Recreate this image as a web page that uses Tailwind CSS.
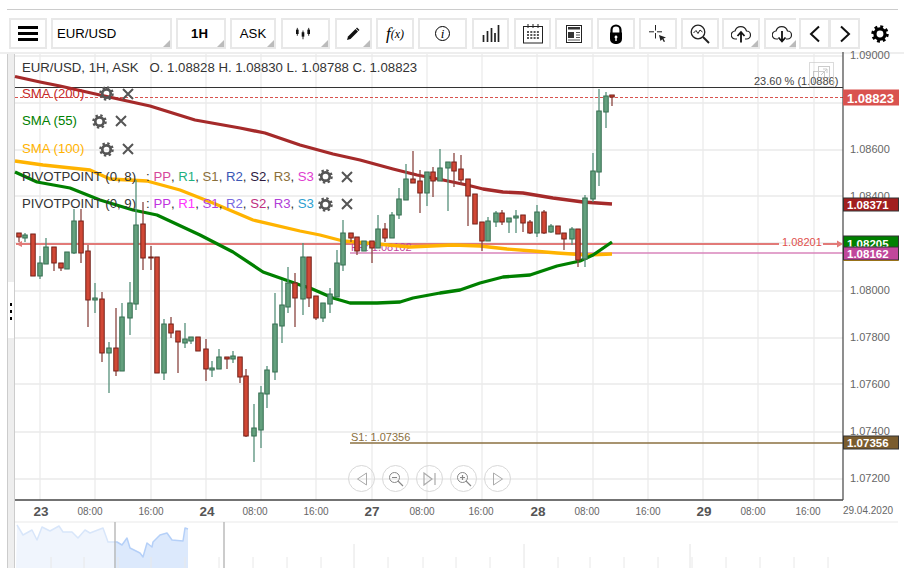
<!DOCTYPE html>
<html lang="en">
<head>
  <meta charset="UTF-8" />
  <title>EUR/USD chart</title>
  <script src="https://cdn.jsdelivr.net/npm/@tailwindcss/browser@4"></script>
</head>
<body class="bg-white overflow-hidden font-['Liberation_Sans',Arial,sans-serif] text-[#333]">
<svg width="0" height="0" class="absolute">
  <symbol id="cog" viewBox="0 0 20 20">
    <circle cx="10" cy="10" r="5.6" fill="none" stroke="currentColor" stroke-width="3.6"/>
    <circle cx="10" cy="10" r="8.2" fill="none" stroke="currentColor" stroke-width="3" stroke-dasharray="3.2 3.24"/>
  </symbol>
  <symbol id="cross" viewBox="0 0 12 12">
    <path d="M1 1L11 11M11 1L1 11" stroke="currentColor" stroke-width="2" fill="none"/>
  </symbol>
</svg>

<div class="relative w-[904px] h-[568px] overflow-hidden">
  <!-- Top bar -->
  <div class="pt-[9px] pl-[7px] pr-[6px]"><div class="h-px bg-[#ccc]"></div></div>
  <div class="flex h-[31px] mt-[8px] pl-[9px] text-[13.2px] text-black">
    <div class="w-[38px] border-2 border-[#e8e8e8] flex flex-col items-center justify-center gap-[3.5px]">
      <i class="block w-[20px] h-[2.5px] bg-black"></i><i class="block w-[20px] h-[2.5px] bg-black"></i><i class="block w-[20px] h-[2.5px] bg-black"></i>
    </div>
    <div class="relative w-[121px] ml-[4px] border-2 border-[#e8e8e8] flex items-center pl-[4px]">EUR/USD<i class="absolute right-0 bottom-0 w-0 h-0 border-l-[7px] border-b-[7px] border-l-transparent border-b-[#bbb]"></i></div>
    <div class="relative w-[50px] ml-[4px] border-2 border-[#e8e8e8] flex items-center justify-center font-bold pr-[3px]">1H<i class="absolute right-0 bottom-0 w-0 h-0 border-l-[7px] border-b-[7px] border-l-transparent border-b-[#bbb]"></i></div>
    <div class="relative w-[46px] ml-[4px] border-2 border-[#e8e8e8] flex items-center justify-center">ASK<i class="absolute right-0 bottom-0 w-0 h-0 border-l-[7px] border-b-[7px] border-l-transparent border-b-[#bbb]"></i></div>
    <div class="relative w-[49px] ml-[5px] border-2 border-[#e8e8e8] flex items-center pl-[12px]">
      <svg width="16" height="14" viewBox="0 0 18 16"><path d="M2.5 1V10M9 4V14M15.500 1V10" stroke="#111" stroke-width="1"/><rect x="1" y="3" width="3" height="5" fill="#111"/><rect x="7.500" y="6" width="3" height="5" fill="#111"/><rect x="14" y="3" width="3" height="5" fill="#111"/></svg>
      <i class="absolute right-0 bottom-0 w-0 h-0 border-l-[7px] border-b-[7px] border-l-transparent border-b-[#bbb]"></i>
    </div>
    <div class="relative w-[37px] ml-[5px] border-2 border-[#e8e8e8] flex items-center pl-[9px]">
      <svg width="14" height="14" viewBox="0 0 14 14"><path d="M1 13L2 9.500L9.500 2L12 4.500L4.500 12Z" fill="#111"/><path d="M10.500 1L13 3.500" stroke="#111" stroke-width="1.500"/></svg>
      <i class="absolute right-0 bottom-0 w-0 h-0 border-l-[7px] border-b-[7px] border-l-transparent border-b-[#bbb]"></i>
    </div>
    <div class="w-[38px] ml-[4px] border-2 border-[#e8e8e8] flex items-center justify-center font-['Liberation_Serif',serif] italic"><span class="text-[17px]">f</span><span class="text-[12px]">(x)</span></div>
    <div class="w-[49px] ml-[4px] border-2 border-[#e8e8e8] flex items-center justify-center">
      <span class="w-[15px] h-[15px] rounded-full border border-black flex items-center justify-center font-['Liberation_Serif',serif] italic text-[13px]">i</span>
    </div>
    <div class="w-[37px] ml-[5px] border-2 border-[#e8e8e8] flex items-center justify-center">
      <svg width="18" height="17" viewBox="0 0 18 17"><path d="M1.500 17V10M5.500 17V6M9.500 17V3M13 17V8M16.500 17V0" stroke="#222" stroke-width="1.700"/></svg>
    </div>
    <div class="w-[37px] ml-[5px] border-2 border-[#e8e8e8] flex items-center justify-center">
      <svg width="20" height="20" viewBox="0 0 20 20"><rect x="0.500" y="2.500" width="19" height="16.500" fill="none" stroke="#222"/><path d="M5 0V4M10 0V4M15 0V4" stroke="#222"/><path d="M4 8H16M4 11H16M4 14H16" stroke="#222" stroke-width="1.600" stroke-dasharray="2 1.300"/></svg>
    </div>
    <div class="w-[38px] ml-[4px] border-2 border-[#e8e8e8] flex items-center justify-center">
      <svg width="16" height="18" viewBox="0 0 16 18"><rect x="0.500" y="0.500" width="15" height="17" fill="none" stroke="#222"/><rect x="2" y="2" width="12" height="2.500" fill="#333"/><rect x="2" y="7" width="6" height="6" fill="#333"/><path d="M10 7.500H14M10 10H14M10 12.500H14M2 15H14" stroke="#555"/></svg>
    </div>
    <div class="w-[38px] ml-[4px] border-2 border-[#e8e8e8] flex items-center justify-center">
      <svg width="16" height="20" viewBox="0 0 16 20"><path d="M3.500 9V6a4.500 4.500 0 0 1 9 0V9" fill="none" stroke="#000" stroke-width="2.200"/><path fill-rule="evenodd" d="M2 8.500H14a2 2 0 0 1 0 0V15a5 5 0 0 1-5 5H7a5 5 0 0 1-5-5ZM8 11.500a1.500 1.500 0 0 0-.7 2.800V17H8.700V14.300a1.500 1.500 0 0 0-.7-2.800Z" fill="#000"/></svg>
    </div>
    <div class="w-[38px] ml-[4px] border-2 border-[#e8e8e8] flex items-center justify-center">
      <svg width="18" height="18" viewBox="0 0 18 18"><path d="M6.500 0V5.500M6.500 8V13.500M0 6.800H5M8 6.800H13" stroke="#222"/><path d="M10 10L17 12.500L14.500 13.500L16 16.500L14.800 17L13.300 14.300L11.500 16Z" fill="#222"/></svg>
    </div>
    <div class="w-[38px] ml-[4px] border-2 border-[#e8e8e8] flex items-center justify-center">
      <svg width="20" height="20" viewBox="0 0 20 20"><circle cx="8" cy="8" r="6.800" fill="none" stroke="#222" stroke-width="1.300"/><path d="M3.500 9L6 6.500L8 9.500L10 6L12.500 8" fill="none" stroke="#222"/><path d="M13 13L19 19" stroke="#222" stroke-width="2"/></svg>
    </div>
    <div class="relative w-[38px] ml-[3px] border-2 border-[#e8e8e8] flex items-center pl-[7px]">
      <svg width="20" height="18" viewBox="0 0 20 18"><path d="M6 14H4.500a4 4 0 0 1-.5-8a6 6 0 0 1 11.500 0a4 4 0 0 1 0 8H14" fill="none" stroke="#222" stroke-width="1.200"/><path d="M10 17.500V8M6.500 11L10 7L13.500 11" fill="none" stroke="#111" stroke-width="1.800"/></svg>
      <i class="absolute right-0 bottom-0 w-0 h-0 border-l-[7px] border-b-[7px] border-l-transparent border-b-[#bbb]"></i>
    </div>
    <div class="relative w-[32px] ml-[4px] border-2 border-r-0 border-[#e8e8e8] flex items-center pl-[6px]">
      <svg width="20" height="18" viewBox="0 0 20 18"><path d="M6 14H4.500a4 4 0 0 1-.5-8a6 6 0 0 1 11.500 0a4 4 0 0 1 0 8H14" fill="none" stroke="#222" stroke-width="1.200"/><path d="M10 6V16M6.500 12.500L10 16.500L13.500 12.500" fill="none" stroke="#111" stroke-width="1.800"/></svg>
      <i class="absolute right-0 bottom-0 w-0 h-0 border-l-[7px] border-b-[7px] border-l-transparent border-b-[#bbb]"></i>
    </div>
    <div class="w-[31px] ml-[3px] border-2 border-[#e8e8e8] flex items-center justify-center">
      <svg width="12" height="18" viewBox="0 0 12 18"><path d="M10 1.500L2 9L10 16.500" fill="none" stroke="#111" stroke-width="2"/></svg>
    </div>
    <div class="w-[31px] -ml-[1px] border-2 border-[#e8e8e8] flex items-center justify-center">
      <svg width="12" height="18" viewBox="0 0 12 18"><path d="M2 1.500L10 9L2 16.500" fill="none" stroke="#111" stroke-width="2"/></svg>
    </div>
    <div class="w-[40px] flex items-center justify-center text-black">
      <svg width="18" height="18"><use href="#cog"/></svg>
    </div>
  </div>

  <!-- Chart -->
  <div class="relative mt-[3px] h-[517px] border-t-2 border-[#eee]">
    <div class="absolute left-[7px] top-0 w-[8px] h-full bg-[#eee] border-l border-r border-[#ccc]"></div>
    <div class="absolute left-[8px] top-[228px] w-[6px] h-[56px] bg-white flex flex-col items-center justify-center gap-[4px] pt-[2px]">
      <i class="block w-[2px] h-[3px] bg-black"></i><i class="block w-[2px] h-[3px] bg-black"></i><i class="block w-[2px] h-[3px] bg-black"></i>
    </div>
    <svg id="chart" class="absolute left-0 top-[-3px]" width="904" height="517" viewBox="0 51 904 517" font-family="Liberation Sans, Arial, sans-serif"></svg>

    <!-- Legend -->
    <div class="absolute left-[22px] top-[2px] flex flex-col text-[13.2px]">
      <div class="h-[24px] flex items-center whitespace-pre">EUR/USD, 1H, ASK   O. 1.08828 H. 1.08830 L. 1.08788 C. 1.08823</div>
      <div class="h-[27px] flex items-center text-[#c62828]">SMA (200)<svg class="ml-[15px] text-[#555]" width="15" height="15"><use href="#cog"/></svg><svg class="ml-[8px] text-[#555]" width="12" height="12"><use href="#cross"/></svg></div>
      <div class="h-[28px] flex items-center text-[#008000]">SMA (55)<svg class="ml-[15px] text-[#555]" width="15" height="15"><use href="#cog"/></svg><svg class="ml-[8px] text-[#555]" width="12" height="12"><use href="#cross"/></svg></div>
      <div class="h-[28px] flex items-center text-[#ffb300]">SMA (100)<svg class="ml-[15px] text-[#555]" width="15" height="15"><use href="#cog"/></svg><svg class="ml-[8px] text-[#555]" width="12" height="12"><use href="#cross"/></svg></div>
      <div class="h-[27px] flex items-center whitespace-pre"><span>PIVOTPOINT (0, 8)</span><span class="ml-[10px]">: </span><span class="text-[#d6479b]">PP</span>, <span class="text-[#1fb07f]">R1</span>, <span class="text-[#8b6f3a]">S1</span>, <span class="text-[#3a57b5]">R2</span>, <span class="text-[#2d1a3f]">S2</span>, <span class="text-[#8b6f3a]">R3</span>, <span class="text-[#e040d0]">S3</span><svg class="ml-[4px] text-[#555]" width="15" height="15"><use href="#cog"/></svg><svg class="ml-[8px] text-[#555]" width="12" height="12"><use href="#cross"/></svg></div>
      <div class="h-[28px] flex items-center whitespace-pre"><span>PIVOTPOINT (0, 9)</span><span class="ml-[10px]">: </span><span class="text-[#c033e0]">PP</span>, <span class="text-[#ff33ff]">R1</span>, <span class="text-[#b040e0]">S1</span>, <span class="text-[#7a6ae0]">R2</span>, <span class="text-[#c0307f]">S2</span>, <span class="text-[#b040d8]">R3</span>, <span class="text-[#2e9fd0]">S3</span><svg class="ml-[4px] text-[#555]" width="15" height="15"><use href="#cog"/></svg><svg class="ml-[8px] text-[#555]" width="12" height="12"><use href="#cross"/></svg></div>
    </div>

    <!-- Popout -->
    <div class="absolute left-[809px] top-[8px] w-[25px] h-[25px] border border-[#ccc]/70 flex items-center justify-center">
      <svg width="17" height="17" viewBox="0 0 17 17" opacity=".5"><rect x="0.500" y="5.500" width="11" height="11" fill="none" stroke="#999"/><rect x="5.500" y="0.500" width="11" height="11" fill="none" stroke="#999"/><path d="M8 9L14 3M10 3H14V7" fill="none" stroke="#999"/></svg>
    </div>

    <!-- Navigation buttons -->
    <div class="absolute left-[348px] top-[411px] flex gap-[7px]">
      <div class="w-[27px] h-[27px] rounded-full border border-[#d8d8d8] flex items-center justify-center"><svg width="12" height="14" viewBox="0 0 12 14"><path d="M10.500 1V13L1.500 7Z" fill="none" stroke="#aaa"/></svg></div>
      <div class="w-[27px] h-[27px] rounded-full border border-[#d8d8d8] flex items-center justify-center"><svg width="16" height="16" viewBox="0 0 16 16"><circle cx="6.500" cy="6.500" r="5" fill="none" stroke="#888"/><path d="M4 6.500H9M10 10L15 15" stroke="#888" stroke-width="1.200"/></svg></div>
      <div class="w-[27px] h-[27px] rounded-full border border-[#d8d8d8] flex items-center justify-center"><svg width="14" height="14" viewBox="0 0 14 14"><path d="M1 1V13L9 7ZM12 1V13" fill="none" stroke="#aaa" stroke-width="1.200"/></svg></div>
      <div class="w-[27px] h-[27px] rounded-full border border-[#d8d8d8] flex items-center justify-center"><svg width="16" height="16" viewBox="0 0 16 16"><circle cx="6.500" cy="6.500" r="5" fill="none" stroke="#888"/><path d="M4 6.500H9M6.500 4V9M10 10L15 15" stroke="#888" stroke-width="1.200"/></svg></div>
      <div class="w-[27px] h-[27px] rounded-full border border-[#d8d8d8] flex items-center justify-center"><svg width="12" height="14" viewBox="0 0 12 14"><path d="M1.500 1V13L10.500 7Z" fill="none" stroke="#aaa"/></svg></div>
    </div>
  </div>
</div>

<script>
  const chart = document.getElementById("chart");
  let out = "";
  const line = (x1, y1, x2, y2, c, w, extra = "") => { out += `<line x1="${x1}" y1="${y1}" x2="${x2}" y2="${y2}" stroke="${c}" stroke-width="${w}" ${extra}/>`; };
  const text = (x, y, s, c, size, extra = "") => { out += `<text x="${x}" y="${y}" fill="${c}" font-size="${size}" ${extra}>${s}</text>`; };
  const tag = (y, h, bg, s, border = "#333", size = 11.500) => {
    out += `<rect x="843.500" y="${y}" width="55" height="${h}" fill="${bg}" stroke="${border}"/>`;
    text(847, y + h - 2.500, s, "#fff", size, 'font-weight="bold"');
  };
  const poly = (pts, c, w = 3.300) => { out += `<polyline points="${pts}" fill="none" stroke="${c}" stroke-width="${w}" stroke-linejoin="round"/>`; };

  // grid
  [40,95,151,206,261,316,372,427,482,537,593,648,703,758,814].forEach(x => line(x, 52, x, 500, "#eee", 1.500));
  [56,103,150,196,243,291,338,384,432,479].forEach(y => line(15, y, 843, y, "#eaeaea", 1.300));

  // price axis labels
  [[59,"1.09000"],[153,"1.08600"],[200,"1.08400"],[294,"1.08000"],[341,"1.07800"],[388,"1.07600"],[435,"1.07400"],[482,"1.07200"]]
    .forEach(([y, s]) => text(850, y, s, "#666", 11));

  // horizontal levels
  line(15, 87.500, 843, 87.500, "#333", 1);
  line(15, 97.500, 843, 97.500, "#d9534f", 1, 'stroke-dasharray="3 2"');
  text(754, 85, "23.60 % (1.0886)", "#444", 11);
  line(16, 244, 779, 244, "#e27a78", 2);
  line(823, 244, 837, 244, "#e27a78", 2);
  out += '<path d="M837 240.500L843 244L837 247.500Z" fill="#e27a78"/><path d="M22 241L16 244L22 247Z" fill="#e27a78"/>';
  text(782, 246, "1.08201", "#e0504c", 11);
  line(350, 253, 843, 253, "#d884bb", 1.500);
  text(351, 251, "PP: 1.08162", "#c0479b", 11);
  line(350, 443, 843, 443, "#8b7040", 1.500);
  text(351, 441, "S1: 1.07356", "#8b7040", 11);

  // moving averages
  poly("15,76.500 40,82 60,86 100,95 150,106 195,120 240,128 265,133 300,145 333,154 360,160 393,169 417,175 443,180 467,185 483,189 503,192 523,193 553,198 583,202 612,204", "#a52a2a");
  poly("15,161 43,165 90,170 110,179 147,181 180,190 213,203 253,220 300,231 320,235 343,241 367,243 410,247 453,245 480,246 507,249 533,251 557,253 587,255 612,254", "#ffb300");
  poly("15,172 37,182 70,188 100,200 133,210 157,215 200,235 233,252 263,272 300,285 310,288 333,298 350,303 377,303 400,302 413,298 440,293 460,290 480,283 503,277 530,275 557,266 580,261 593,255 612,242", "#008000");

  // candles: x, wick top, wick bottom, body top, body bottom, colour
  const candles = [
    [19,233,242,233,237,"r"],[25,233,242,235,238,"g"],[33,234,276,234,276,"r"],[40,256,279,263,276,"g"],[46,238,264,247,264,"g"],[54,247,271,247,263,"r"],[61,263,271,263,268,"r"],[67,252,269,252,269,"g"],
    [74,209,254,221,253,"g"],[81,209,263,221,253,"r"],[88,245,327,251,300,"r"],[95,283,313,298,300,"g"],[102,292,362,299,353,"r"],[109,342,393,348,353,"g"],[116,308,376,348,371,"r"],[122,303,371,317,371,"g"],
    [130,282,335,303,318,"g"],[136,180,310,225,304,"g"],[143,202,270,224,258,"r"],[151,246,270,257,258,"r"],[157,257,373,257,373,"r"],[164,319,380,324,373,"g"],[171,317,338,324,333,"r"],[178,331,373,331,342,"r"],
    [185,323,348,339,343,"g"],[191,337,344,337,341,"g"],[198,337,351,337,351,"r"],[206,339,381,349,369,"r"],[212,361,377,368,370,"g"],[219,349,369,357,369,"g"],[227,357,369,357,359,"r"],[233,351,363,356,359,"g"],
    [240,357,383,357,377,"r"],[246,369,437,376,436,"r"],[254,404,462,428,436,"g"],[261,386,448,393,430,"g"],[267,366,408,370,394,"g"],[275,293,380,324,372,"g"],[282,280,343,305,326,"g"],[288,267,313,283,307,"g"],
    [295,273,327,283,298,"r"],[303,243,315,257,299,"g"],[309,257,307,257,298,"r"],[316,296,320,296,318,"r"],[323,303,322,303,318,"g"],[330,288,313,294,304,"g"],[337,250,297,263,297,"g"],[343,220,271,233,265,"g"],
    [351,233,242,233,238,"r"],[357,237,255,237,251,"r"],[364,241,251,241,251,"g"],[372,241,263,241,248,"r"],[378,215,248,229,248,"g"],[385,223,242,229,238,"r"],[392,212,238,215,238,"g"],[399,188,219,199,215,"g"],
    [406,164,200,179,200,"g"],[413,151,183,179,183,"r"],[420,170,213,181,193,"r"],[427,172,206,172,193,"g"],[433,167,197,172,181,"r"],[440,149,181,168,181,"g"],[448,162,211,162,168,"g"],[454,153,187,162,171,"r"],
    [461,155,185,169,180,"r"],[468,179,226,179,196,"r"],[475,194,224,194,224,"r"],[482,222,251,222,241,"r"],[488,217,241,221,241,"g"],[496,211,227,213,222,"g"],[502,210,225,213,222,"r"],[509,218,233,218,222,"g"],
    [516,210,233,216,218,"g"],[523,215,232,215,223,"r"],[530,220,234,222,233,"r"],[537,205,237,212,233,"g"],[544,210,234,212,233,"r"],[551,224,233,226,232,"g"],[558,226,234,226,234,"r"],[564,233,250,233,239,"r"],
    [572,227,245,229,239,"g"],[578,229,267,229,260,"r"],[585,195,267,198,259,"g"],[593,153,202,171,199,"g"],[599,89,186,111,172,"g"],[606,92,128,96,112,"g"],[612,95,106,95,97,"r"]
  ];
  candles.forEach(([x, wt, wb, bt, bb, c]) => {
    const wick = c === "r" ? "#8a4540" : "#55907a";
    const fill = c === "r" ? "#d14836" : "#64a07e";
    const edge = c === "r" ? "#701a12" : "#2e6b4c";
    line(x, wt, x, wb, wick, 1.300);
    out += `<rect x="${x - 3}" y="${bt - .5}" width="6" height="${Math.max(bb - bt + 1, 2)}" fill="#999" opacity=".3"/>`;
    out += `<rect x="${x - 2.200}" y="${bt}" width="4.400" height="${Math.max(bb - bt, 1)}" fill="${fill}" stroke="${edge}" stroke-width=".9"/>`;
  });

  // axes
  line(843, 52, 843, 500, "#444", 1.200);
  line(15, 500, 843, 500, "#444", 1.500);
  out += '<rect x="844" y="500.800" width="60" height="21" fill="#fff"/>';

  // price tags
  tag(90, 15, "#d9534f", "1.08823", "#d9534f", 13);
  tag(198, 13, "#a11f1f", "1.08371");
  tag(236, 14, "#008000", "1.08205");
  out += '<rect x="843.500" y="259" width="55" height="2" fill="#ffb300"/>';
  tag(247, 13, "#c0479b", "1.08162");
  tag(436, 13, "#7a5c2e", "1.07356");

  // time axis
  [[90,"08:00"],[151,"16:00"],[255,"08:00"],[316,"16:00"],[422,"08:00"],[481,"16:00"],[587,"08:00"],[648,"16:00"],[753,"08:00"],[808,"16:00"]]
    .forEach(([x, s]) => text(x, 514.500, s, "#666", 10, 'text-anchor="middle"'));
  [[41,"23"],[207,"24"],[372,"27"],[538,"28"],[704,"29"]]
    .forEach(([x, s]) => text(x, 516, s, "#555", 13.500, 'text-anchor="middle" font-weight="bold"'));
  text(868, 514, "29.04.2020", "#666", 10, 'text-anchor="middle"');
  line(15, 522, 898, 522, "#eaeaea", 1.200);

  // navigator
  const pale = "17,525 23,535 32,530 37,540 42,527 50,531 59,526 63,532 72,532 78,538 85,530 90,533 103,528 108,542 114,542";
  const blue = "114,542 117,542 122,545 127,538 130,548 140,553 143,557 147,543 152,547 153,542 160,535 167,533 172,540 183,541 185,528 188,529";
  out += `<polygon points="16,568 ${pale} 114,568" fill="#f0f5fd"/><polygon points="${blue} 188,568 114,568" fill="#dce9fc"/>`;
  poly(pale, "#d8e6fa", 1.500);
  poly(blue, "#b5d0f8", 1.500);
  [51,84,118,151,185,219,253,287,321,388,423,456,490,558,590,624,658,692,726,760,794,828].forEach(x => line(x, 557, x, 568, "#e8e8e8", 1));
  [354,524,690].forEach(x => line(x, 544, x, 568, "#e4e4e4", 1));
  line(115, 522, 115, 568, "#bbb", 1.500);
  line(224, 522, 224, 568, "#bbb", 1.500);

  chart.innerHTML = out;
</script>
</body>
</html>
